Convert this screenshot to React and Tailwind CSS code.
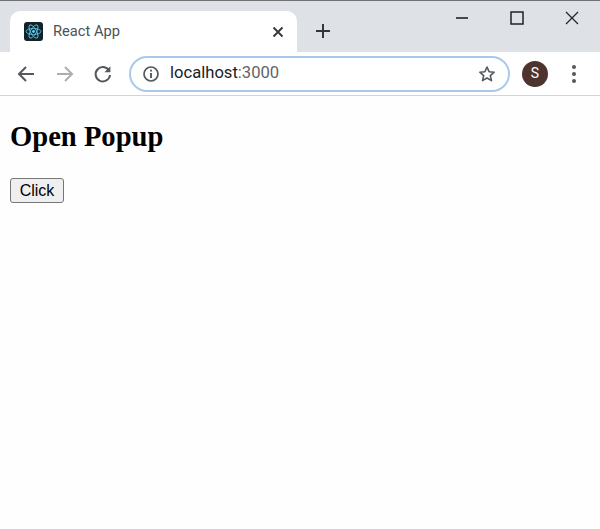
import React from "react";

function ReactLogo() {
  return (
    <div className="w-[19px] h-[19px] rounded-[3px] bg-[#14222a] flex items-center justify-center">
      <svg width="17" height="17" viewBox="-12 -12 24 24" fill="none" stroke="#61dafb" strokeWidth="1.1">
        <circle r="2" fill="#61dafb" stroke="none" />
        <ellipse rx="10.5" ry="4.2" />
        <ellipse rx="10.5" ry="4.2" transform="rotate(60)" />
        <ellipse rx="10.5" ry="4.2" transform="rotate(120)" />
      </svg>
    </div>
  );
}

function Ic({ children, w = 20, h = 20, vb = "0 0 20 20", cls = "" }) {
  return (
    <svg width={w} height={h} viewBox={vb} fill="none" className={"block shrink-0 " + cls}>
      {children}
    </svg>
  );
}

export default function App() {
  return (
    <div className="w-[600px] h-[529px] bg-white flex flex-col overflow-hidden">
      <div className="h-[52px] bg-[#dee1e6] border-t border-t-[#6f7175] flex items-start">
        <div className="ml-[10px] mt-[10px] w-[287px] h-[41px] bg-white rounded-t-[10px] flex items-center pl-[14px] pr-[13px]">
          <ReactLogo />
          <span className="ml-[10px] text-[14.7px] text-[#4c5156] font-['Roboto',sans-serif]">React App</span>
          <Ic w={12} h={12} vb="0 0 12 12" cls="ml-auto">
            <path d="M1.5 1.5l9 9M10.5 1.5l-9 9" stroke="#33363a" strokeWidth="1.8" />
          </Ic>
        </div>
        <Ic w={16} h={16} vb="0 0 16 16" cls="ml-[18px] mt-[22px]">
          <path d="M8 1v14M1 8h14" stroke="#33363a" strokeWidth="2" />
        </Ic>
        <div className="ml-auto flex items-start">
          <Ic w={14} h={4} vb="0 0 14 4" cls="mt-[15px] mr-[41px]">
            <path d="M1 2h12" stroke="#222" strokeWidth="1.6" />
          </Ic>
          <Ic w={14} h={14} vb="0 0 14 14" cls="mt-[10px] mr-[41px]">
            <rect x="1" y="1" width="12" height="12" stroke="#222" strokeWidth="1.5" />
          </Ic>
          <Ic w={14} h={14} vb="0 0 14 14" cls="mt-[10px] mr-[21px]">
            <path d="M1 1l12 12M13 1L1 13" stroke="#222" strokeWidth="1.2" />
          </Ic>
        </div>
      </div>

      <div className="h-[44px] bg-white border-b border-b-[#d2d4d8] flex items-center">
        <Ic cls="ml-[16px]">
          <path d="M18 10H3.5M10 3l-7 7 7 7" stroke="#55585c" strokeWidth="2" />
        </Ic>
        <Ic cls="ml-[19px]">
          <path d="M2 10h14.5M10 3l7 7-7 7" stroke="#acaeb1" strokeWidth="2" />
        </Ic>
        <Ic cls="ml-[18px]">
          <path d="M16 6.5A7.2 7.2 0 1 0 17 11" stroke="#55585c" strokeWidth="2" />
          <path d="M17.4 2.2v6h-6z" fill="#55585c" />
        </Ic>
        <div className="ml-[16px] w-[381px] h-[36px] rounded-full border-2 border-[#a9c9ec] flex items-center pl-[11px] pr-[12px]">
          <Ic w={18} h={18} vb="0 0 18 18">
            <circle cx="9" cy="9" r="7" stroke="#55585c" strokeWidth="1.7" />
            <path d="M9 8v5" stroke="#55585c" strokeWidth="1.9" />
            <path d="M9 4.7v1.9" stroke="#55585c" strokeWidth="1.9" />
          </Ic>
          <span className="ml-[10px] text-[16.6px] text-[#202124] font-['Roboto',sans-serif]">
            localhost<span className="text-[#5f6368]">:3000</span>
          </span>
          <Ic w={18} h={18} vb="0 0 18 18" cls="ml-auto">
            <path d="M9 2l2.1 4.7 5.1.5-3.9 3.4 1.2 5L9 13l-4.5 2.6 1.2-5-3.9-3.4 5.1-.5z" stroke="#55585c" strokeWidth="1.6" strokeLinejoin="round" />
          </Ic>
        </div>
        <div className="ml-[12px] w-[26px] h-[26px] rounded-full bg-[#4e342e] text-white flex items-center justify-center text-[14px] font-['Roboto',sans-serif]">
          S
        </div>
        <div className="ml-[24px] flex flex-col gap-[3px]">
          <div className="w-[4px] h-[4px] rounded-full bg-[#55585c]" />
          <div className="w-[4px] h-[4px] rounded-full bg-[#55585c]" />
          <div className="w-[4px] h-[4px] rounded-full bg-[#55585c]" />
        </div>
      </div>

      <div className="flex-1 bg-[#fffeff] pl-[10px] pt-[26px] font-['Liberation_Serif',serif]">
        <h2 className="text-[28.6px] leading-[30px] font-bold text-black">Open Popup</h2>
        <button className="mt-[26px] block w-[54px] h-[25px] bg-[#efefef] border border-[#767676] rounded-[3px] text-[16px] leading-none text-black font-['Liberation_Sans',sans-serif]">
          Click
        </button>
      </div>
    </div>
  );
}
